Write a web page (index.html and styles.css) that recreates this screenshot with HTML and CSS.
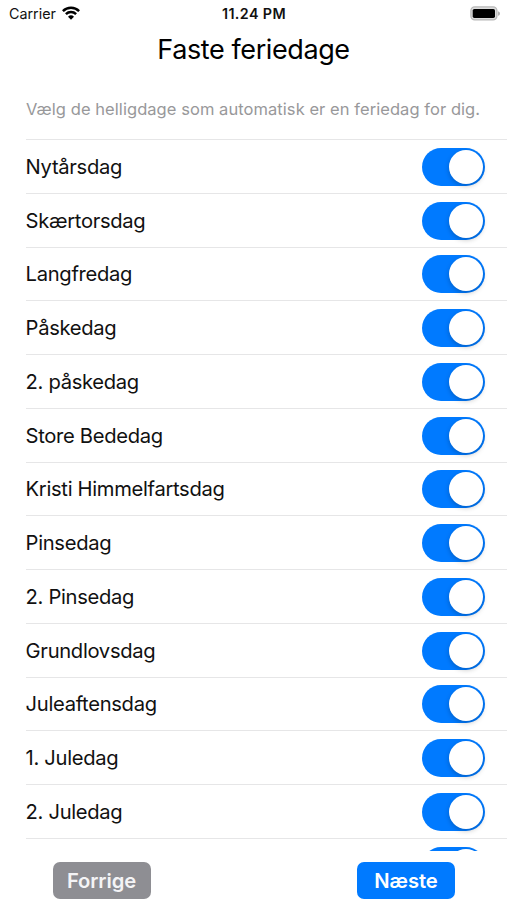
FILE: index.html
```
<!DOCTYPE html>
<html lang="da">
<head>
<meta charset="utf-8">
<title>Faste feriedage</title>
<link rel="stylesheet" href="styles.css">
</head>
<body>
<header class="status">
  <div class="carrier"><span>Carrier</span>
    <svg class="wifi" viewBox="0 0 18 14" width="18" height="14"><g fill="none" stroke="#000" stroke-width="2.5"><path d="M.9 5.1A11.6 11.6 0 0 1 17.1 5.1"/><path d="M3.9 8.2A7.3 7.3 0 0 1 14.1 8.2"/></g><path d="M6 10.7A4.3 4.3 0 0 1 12 10.7L9 13.7Z"/></svg>
  </div>
  <div class="time">11.24 PM</div>
  <svg class="battery" viewBox="0 0 31 15" width="31" height="15"><rect x=".9" y=".9" width="26" height="13" rx="3.8" fill="#ddd" stroke="#b8b8b8" stroke-width="1.3"/><rect x="2.7" y="2.9" width="22.3" height="9" rx="1.6"/><path d="M28.1 5.2v4.6c2.4-.8 2.4-3.8 0-4.6Z" fill="#aaa"/></svg>
</header>
<h1><span>Faste feriedage</span></h1>
<p class="intro"><span>Vælg de helligdage som automatisk er en feriedag for dig.</span></p>
<main class="list">
  <div class="row"><span>Nytårsdag</span><i class="switch"></i></div>
  <div class="row"><span>Skærtorsdag</span><i class="switch"></i></div>
  <div class="row"><span>Langfredag</span><i class="switch"></i></div>
  <div class="row"><span>Påskedag</span><i class="switch"></i></div>
  <div class="row"><span>2. påskedag</span><i class="switch"></i></div>
  <div class="row"><span>Store Bededag</span><i class="switch"></i></div>
  <div class="row"><span>Kristi Himmelfartsdag</span><i class="switch"></i></div>
  <div class="row"><span>Pinsedag</span><i class="switch"></i></div>
  <div class="row"><span>2. Pinsedag</span><i class="switch"></i></div>
  <div class="row"><span>Grundlovsdag</span><i class="switch"></i></div>
  <div class="row"><span>Juleaftensdag</span><i class="switch"></i></div>
  <div class="row"><span>1. Juledag</span><i class="switch"></i></div>
  <div class="row"><span>2. Juledag</span><i class="switch"></i></div>
  <div class="row"><span></span><i class="switch"></i></div>
</main>
<footer class="actions">
  <button class="btn back">Forrige</button>
  <button class="btn next">Næste</button>
</footer>
</body>
</html>
```
FILE: styles.css
```
* { box-sizing: border-box; }
body {
  margin: 0;
  width: 507px;
  height: 900px;
  overflow: hidden;
  display: flex;
  flex-direction: column;
  background: #fff;
  color: #111;
  font-family: Inter, "Liberation Sans", sans-serif;
}
.status {
  display: grid;
  grid-template-columns: 1fr auto 1fr;
  align-items: center;
  height: 27px;
  padding: 0 6px 0 9px;
  font-size: 14.3px;
}
.carrier { display: flex; align-items: center; gap: 6px; }
.wifi { margin-top: -2px; }
.time { font-weight: 600; letter-spacing: 0.4px; margin-left: -2px; }
.battery { justify-self: end; margin-top: -1px; }
h1 {
  margin: 0;
  height: 45px;
  line-height: 45px;
  text-align: center;
  font-size: 27px;
  font-weight: 400;
  letter-spacing: -0.4px;
  color: #000;
}
.intro {
  margin: 0;
  height: 67px;
  padding: 25px 0 0 26px;
  font-size: 16.5px;
  line-height: 24px;
  letter-spacing: 0.06px;
  color: #98989a;
  white-space: nowrap;
}
.list {
  height: 712px;
  overflow: hidden;
  flex: none;
  padding-left: 26px;
}
.row {
  display: flex;
  align-items: center;
  justify-content: space-between;
  height: 53.75px;
  padding-right: 22px;
  border-top: 1px solid #e6e6e7;
  font-size: 20.2px;
  letter-spacing: -0.32px;
}
.row span { margin-left: -0.4px; }
.switch {
  display: flex;
  justify-content: flex-end;
  width: 63px;
  height: 38px;
  margin-top: 1px;
  padding: 2px;
  border-radius: 19px;
  background: #007aff;
}
.switch::after {
  content: "";
  width: 34px;
  height: 34px;
  border-radius: 50%;
  background: #fff;
  box-shadow: 0 2px 5px rgba(0, 0, 0, 0.22);
}
.actions {
  display: flex;
  justify-content: space-between;
  padding: 11px 52px 0 52.5px;
}
.btn {
  width: 98px;
  height: 37px;
  padding: 0;
  border: 0;
  border-radius: 7px;
  color: #fff;
  font: 600 20.2px Inter, "Liberation Sans", sans-serif;
  letter-spacing: -0.08px;
}
.back { background: #8e8e93; color: #f4f4f6; }
.next { background: #007aff; }
```
